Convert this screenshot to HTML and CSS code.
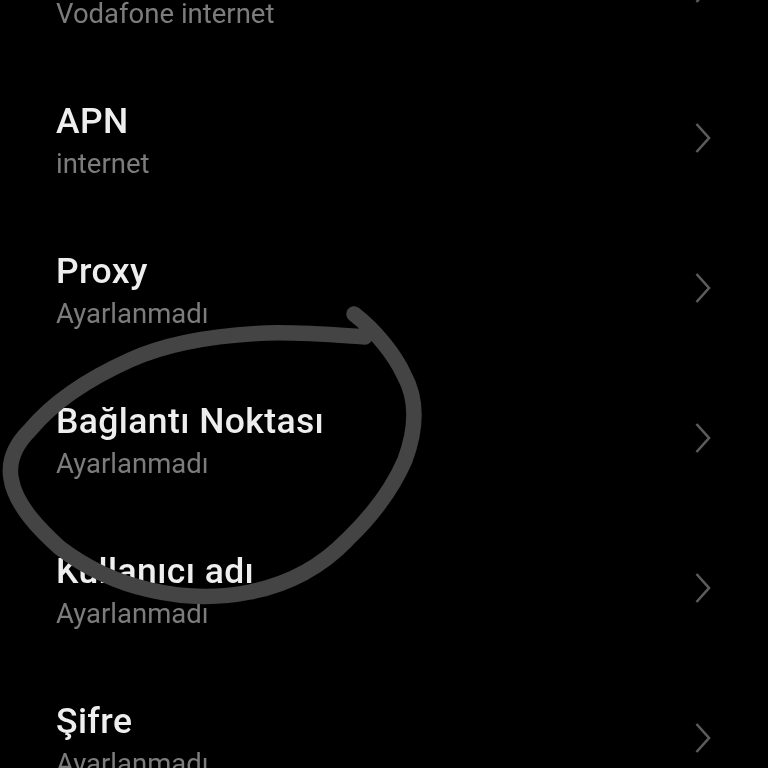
FILE: index.html
```html
<!DOCTYPE html>
<html lang="tr">
<head>
<meta charset="utf-8">
<title>APN</title>
<link rel="stylesheet" href="styles.css">
</head>
<body>
<div class="screen">
  <ul class="list">
    <li class="row"><div class="text"><div class="title">Ad</div><div class="sub">Vodafone internet</div></div><svg class="chev" viewBox="0 0 16 30"><path d="M1.5 1 L14 15 L1.5 29"/></svg></li>
    <li class="row"><div class="text"><div class="title">APN</div><div class="sub">internet</div></div><svg class="chev" viewBox="0 0 16 30"><path d="M1.5 1 L14 15 L1.5 29"/></svg></li>
    <li class="row"><div class="text"><div class="title">Proxy</div><div class="sub">Ayarlanmadı</div></div><svg class="chev" viewBox="0 0 16 30"><path d="M1.5 1 L14 15 L1.5 29"/></svg></li>
    <li class="row"><div class="text"><div class="title">Bağlantı Noktası</div><div class="sub">Ayarlanmadı</div></div><svg class="chev" viewBox="0 0 16 30"><path d="M1.5 1 L14 15 L1.5 29"/></svg></li>
    <li class="row"><div class="text"><div class="title">Kullanıcı adı</div><div class="sub">Ayarlanmadı</div></div><svg class="chev" viewBox="0 0 16 30"><path d="M1.5 1 L14 15 L1.5 29"/></svg></li>
    <li class="row"><div class="text"><div class="title">Şifre</div><div class="sub">Ayarlanmadı</div></div><svg class="chev" viewBox="0 0 16 30"><path d="M1.5 1 L14 15 L1.5 29"/></svg></li>
  </ul>
  <svg class="scribble" viewBox="0 0 768 768"><path d="M354 314 C375 330 395 355 404 375 C418 400 416 430 405 460 C392 490 372 516 347 540 C320 568 285 585 250 592 C215 599 180 597 150 590 C115 582 85 567 60 548 C40 530 15 505 11 478 C8 460 15 445 30 430 C55 400 90 378 130 360 C170 342 220 335 267 333 C300 332 335 335 365 337"/></svg>
</div>
</body>
</html>
```
FILE: styles.css
```css
html, body {
  margin: 0;
  background: #000;
}
.screen {
  position: relative;
  width: 768px;
  height: 768px;
  overflow: hidden;
  background: #000;
  font-family: Roboto, "Noto Sans", sans-serif;
}
.list {
  list-style: none;
  margin: -87px 0 0;
  padding: 0;
  filter: blur(0.4px);
}
.row {
  height: 150px;
  box-sizing: border-box;
  padding: 0 57px 0 56px;
  display: flex;
  align-items: center;
  justify-content: space-between;
}
.text {
  margin-top: 6px;
}
.title {
  font-size: 35.5px;
  font-weight: 500;
  letter-spacing: 0.4px;
  line-height: 42px;
  color: #eee;
}
.sub {
  font-size: 27.5px;
  line-height: 36px;
  margin-top: 4px;
  color: #7c7c7c;
}
.chev {
  width: 16px;
  height: 30px;
  flex: none;
  fill: none;
  stroke: #5c5c5c;
  stroke-width: 2.6;
}
.scribble {
  position: absolute;
  inset: 0;
  width: 768px;
  height: 768px;
  fill: none;
  stroke: #444;
  stroke-width: 15.5;
  stroke-linecap: round;
  stroke-linejoin: round;
}
```
